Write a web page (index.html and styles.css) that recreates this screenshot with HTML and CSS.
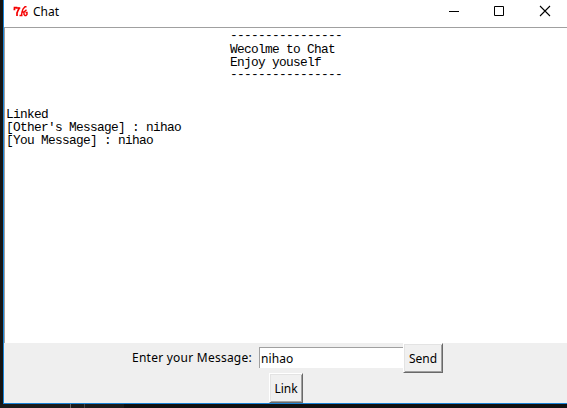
FILE: index.html
```html
<!DOCTYPE html>
<html lang="en">
<head>
<meta charset="utf-8">
<title>Chat</title>
<link rel="stylesheet" href="styles.css">
</head>
<body>
<main class="window">
  <header class="titlebar">
    <svg class="logo" width="16" height="12" viewBox="0 0 16 12" fill="none" stroke="#f50000">
      <path d="M.5 3.5H1.5V1.5H3.5V2H6.5V1.5L5 4.5L4 7V10" stroke-width="1.7"/>
      <path d="M13.5 .7H12L10 3L9 6L8.5 9.5M6.5 9.5H9.5M9.5 6H11L13.5 3.7M11 6.5V8.5L12 9.5H13L14 8.5V6.5H12.5" stroke-width="1.4"/>
    </svg>
    <span class="title">Chat</span>
    <svg class="controls" width="103" height="12" viewBox="0 0 103 12" fill="none" stroke="#000">
      <path d="M0 6.5H10M45.5 1.5H54.5V10.5H45.5Z"/>
      <path d="M91 1L101 11M101 1L91 11" stroke-width="1.1"/>
    </svg>
  </header>
  <section class="log">
    <div class="banner">
      <pre class="rule">----------------</pre>
<pre>Wecolme to Chat
Enjoy youself</pre>
      <pre class="rule">----------------</pre>
    </div>
<pre class="messages">Linked
[Other's Message] : nihao
[You Message] : nihao</pre>
  </section>
  <footer class="panel">
    <div class="compose">
      <label class="label" for="message">Enter your Message:</label>
      <input class="entry" id="message" value="nihao">
      <button class="button send">Send</button>
    </div>
    <button class="button link">Link</button>
  </footer>
</main>
<div class="taskbar"><i class="tick"></i><i class="tick dim"></i><i class="shade"></i></div>
</body>
</html>
```
FILE: styles.css
```css
* { box-sizing: border-box; }
body {
  margin: 0;
  width: 567px;
  height: 408px;
  overflow: hidden;
  background: #151515;
  font-family: "Noto Sans", "Open Sans", sans-serif;
  font-size: 12px;
  color: #000;
}
.window {
  height: 404px;
  margin-left: 3px;
  border-left: 1px solid #1883d7;
  border-bottom: 1px solid #1883d7;
  background: #fff;
}
.titlebar {
  display: flex;
  align-items: flex-start;
  height: 27px;
  padding-left: 9px;
}
.logo { margin-top: 6px; }
.title { margin: 3px 0 0 4px; line-height: 17px; font-size: 12px; }
.controls { margin: 5px 15px 0 auto; }
.log {
  height: 316px;
  border-top: 1px solid #a0a0a0;
  border-left: 1px solid #a0a0a0;
  padding: 2px 0 0 1px;
}
pre {
  margin: 0;
  font: 12.8px/13px "Liberation Mono", monospace;
  letter-spacing: -0.681px;
}
.banner { display: flex; flex-direction: column; margin-left: 224px; }
.rule { margin-bottom: 2px; line-height: 11px; }
.messages { margin-top: 26px; }
.panel {
  height: 60px;
  background: #efefef;
}
.compose { display: flex; height: 30px; padding-left: 128px; }
.label { width: 127px; line-height: 30px; white-space: nowrap; letter-spacing: .24px; }
.entry {
  width: 144px;
  height: 21px;
  margin-top: 4px;
  padding: 0 1px;
  border: 0 solid #a0a0a0;
  border-width: 1px 0 0 1px;
  border-radius: 0;
  background: #fff;
  font: inherit;
  letter-spacing: .1px;
}
.button {
  display: block;
  padding: 0;
  height: 30px;
  border: 1px solid;
  border-color: #fff #696969 #696969 #fff;
  border-radius: 0;
  background: #f0f0f0;
  box-shadow: inset 1px 1px #e3e3e3, inset -1px -1px #a0a0a0;
  font: inherit;
  color: #000;
}
.send { width: 40px; }
.link { width: 34px; margin-left: 265px; }
.taskbar { display: flex; height: 4px; padding-left: 70px; background: #1b1b1b; }
.tick { width: 1px; margin-right: 13px; background: #666; }
.dim { background: #444; }
.shade { flex: 1; margin-left: 26px; background: #101010; }
```
